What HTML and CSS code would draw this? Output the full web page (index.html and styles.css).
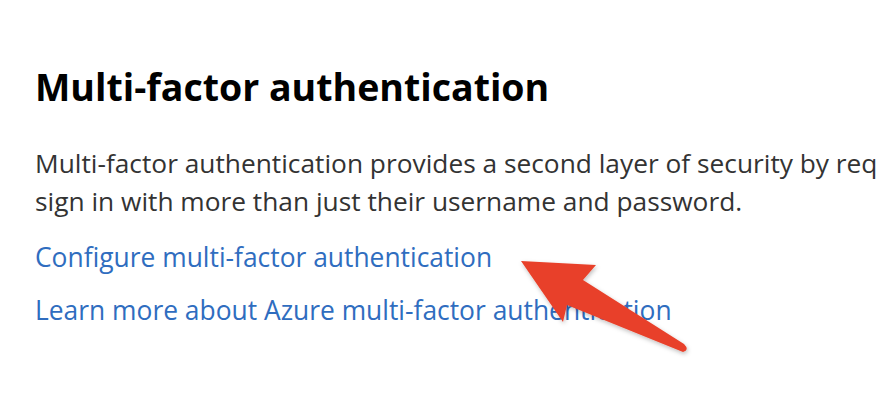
FILE: index.html
```html
<!DOCTYPE html>
<html lang="en">
<head>
  <meta charset="UTF-8" />
  <title>Multi-factor authentication</title>
  <link rel="stylesheet" href="styles.css">
</head>
<body>
  <section class="mfa">
    <h1 class="mfa-title">Multi-factor authentication</h1>
    <p class="mfa-text">Multi-factor authentication provides a second layer of security by requiring users to sign in with more than just their username and password.</p>
    <a class="mfa-link" href="#">Configure multi-factor authentication</a>
    <a class="mfa-link" href="#">Learn more about Azure multi-factor authentication</a>
  </section>

  <svg class="callout" width="878" height="400" viewBox="0 0 878 400">
    <defs>
      <filter id="shadow" x="-10%" y="-10%" width="130%" height="130%">
        <feDropShadow dx="1" dy="2" stdDeviation="2" flood-color="#000" flood-opacity="0.25" />
      </filter>
    </defs>
    <path d="M521 261 L596 265 L583 280 L684 344 Q690 350 683 352 L567 305 L563 322 Z" fill="#e8412a" filter="url(#shadow)" />
  </svg>
</body>
</html>
```

FILE: styles.css
```css
:root {
  --text: #333333;
  --heading: #000000;
  --link: #2f6dbf;
}

body {
  margin: 0;
  background: #ffffff;
  font-family: 'Open Sans', 'Noto Sans', sans-serif;
  overflow: hidden;
  width: 878px;
  height: 400px;
  position: relative;
}

.mfa {
  padding: 62px 0 0 35px;
  width: 1100px;
  display: flex;
  flex-direction: column;
  align-items: flex-start;
}

.mfa-title {
  margin: 0 0 32px;
  font-size: 37.5px;
  font-weight: 700;
  color: var(--heading);
  line-height: 50px;
}

.mfa-text {
  margin: 0 0 17px;
  font-size: 26.3px;
  line-height: 38px;
  color: var(--text);
  width: 1050px;
}

.mfa-link {
  color: var(--link);
  text-decoration: none;
  font-size: 26.4px;
  line-height: 40px;
  margin-bottom: 13px;
}

.callout {
  position: absolute;
  top: 0;
  left: 0;
  pointer-events: none;
}
```
